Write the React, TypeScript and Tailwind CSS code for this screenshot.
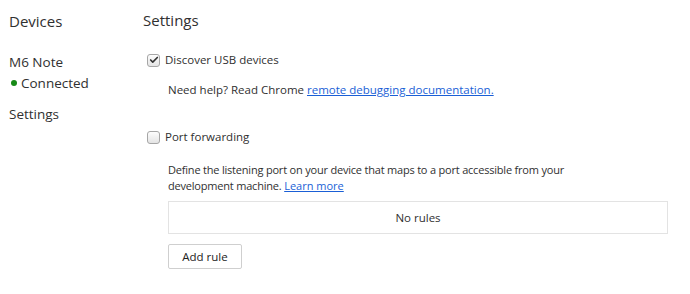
import { Check } from "lucide-react"

function Box({ checked }: { checked?: boolean }) {
  return (
    <span className="flex h-[13px] w-[13px] shrink-0 items-center justify-center rounded-[3px] border border-[#a6a6a6] bg-gradient-to-b from-[#fdfdfd] to-[#e4e4e4]">
      {checked && <Check className="h-[10px] w-[10px] text-[#333]" strokeWidth={4} />}
    </span>
  )
}

export default function App() {
  return (
    <div className="flex h-[294px] w-[690px] bg-white text-[#303030] [font-family:'Open_Sans',sans-serif]">
      <aside className="w-[143px] shrink-0 pl-[9px]">
        <h1 className="mt-[10px] text-[15px] leading-[22px]">Devices</h1>
        <div className="mt-[20px] text-[13.5px] leading-[20px]">
          <div>M6 Note</div>
          <div className="mt-[1px] flex items-center gap-[4px] pl-[2px]">
            <span className="h-[6px] w-[6px] rounded-full bg-[#178a17]"></span>
            Connected
          </div>
          <div className="mt-[11px]">Settings</div>
        </div>
      </aside>

      <main className="flex-1 pr-[22px]">
        <h2 className="mt-[9px] text-[15px] leading-[22px]">Settings</h2>

        <label className="mt-[21px] flex items-center gap-[5px] pl-[4px] text-[11.5px] leading-[16px]">
          <Box checked />
          Discover USB devices
        </label>
        <p className="mt-[14px] pl-[25px] text-[11.5px] leading-[16px]">
          Need help? Read Chrome{" "}
          <a className="text-[#1a5fd6] underline">remote debugging documentation.</a>
        </p>

        <label className="mt-[31px] flex items-center gap-[5px] pl-[4px] text-[11.5px] leading-[16px]">
          <Box />
          Port forwarding
        </label>
        <div className="pl-[25px]">
          <p className="mt-[17px] text-[11px] leading-[16px] tracking-[-0.2px]">
            Define the listening port on your device that maps to a port accessible from your
            <br />
            development machine.{" "}
            <a className="text-[#1a5fd6] underline tracking-normal">Learn more</a>
          </p>
          <div className="mt-[7px] flex h-[33px] items-center justify-center border border-[#e3e3e3] text-[11.5px]">
            No rules
          </div>
          <button className="mt-[10px] h-[25px] w-[74px] rounded-[2px] border border-[#cfcfcf] bg-white text-[11.5px] text-[#222]">
            Add rule
          </button>
        </div>
      </main>
    </div>
  )
}
